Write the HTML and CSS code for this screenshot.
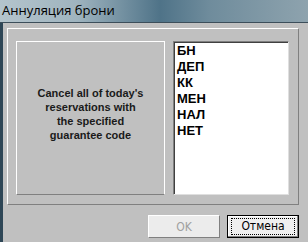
FILE: index.html
```html
<!DOCTYPE html>
<html lang="ru">
<head>
    <meta charset="UTF-8">
    <title>Аннуляция брони</title>
    <link rel="stylesheet" href="styles.css">
</head>
<body>
    <div class="titlebar">Аннуляция брони</div>
    <div class="window">
        <div class="panel">
            <div class="info">
                <p>Cancel all of today's<br>reservations with<br>the specified<br>guarantee code</p>
            </div>
            <ul class="codes">
                <li>БН</li>
                <li>ДЕП</li>
                <li>КК</li>
                <li>МЕН</li>
                <li>НАЛ</li>
                <li>НЕТ</li>
            </ul>
        </div>
        <div class="buttons">
            <button class="btn" disabled>OK</button>
            <button class="btn default"><span>Отмена</span></button>
        </div>
    </div>
</body>
</html>
```

FILE: styles.css
```css
/* dialog */
* {
    box-sizing: border-box;
}

body {
    margin: 0;
    width: 308px;
    height: 242px;
    overflow: hidden;
    background: #c0c0c0;
    font-family: "Liberation Sans", Arial, sans-serif;
}

.titlebar {
    height: 23px;
    line-height: 21px;
    padding-left: 2px;
    font-family: "Open Sans", "DejaVu Sans", sans-serif;
    font-size: 13px;
    color: #000;
    background: linear-gradient(90deg, #b4c4cc 0%, #9fb4bf 25%, #4f7388 52%, #6f8c9c 68%, #8ea3ae 100%);
    border-bottom: 1px solid #3c4e5a;
}

.window {
    height: 219px;
    border-left: 3px solid #2e4656;
    display: flex;
    flex-direction: column;
    padding: 5px 9px 0 4px;
}

.panel {
    height: 177px;
    border: 1px solid;
    border-color: #fff #808080 #808080 #fff;
    display: flex;
    gap: 8px;
    padding: 12px 9px 9px 8px;
}

.info {
    width: 149px;
    border: 1px solid;
    border-color: #fff #fff #808080 #fff;
    display: flex;
    align-items: center;
    justify-content: center;
    padding-bottom: 8px;
}

.info p {
    margin: 0;
    text-align: center;
    font-size: 11px;
    font-weight: bold;
    line-height: 14px;
    color: #1a1a1a;
}

.codes {
    flex: 1;
    margin: 0;
    list-style: none;
    background: #fff;
    border: 1px solid;
    border-color: #808080 #dfdfdf #dfdfdf #808080;
    box-shadow: inset 1px 1px 0 #404040;
    padding: 1px 3px;
}

.codes li {
    font-size: 13px;
    font-weight: bold;
    line-height: 16px;
    color: #000;
}

.buttons {
    display: flex;
    justify-content: flex-end;
    gap: 7px;
    margin-top: 10px;
}

.btn {
    width: 72px;
    height: 23px;
    padding: 0;
    background: #efefef;
    border: 1px solid;
    border-color: #fff #808080 #808080 #fff;
    font-family: "DejaVu Sans Condensed", "DejaVu Sans", sans-serif;
    font-size: 12px;
    color: #000;
}

.btn:disabled {
    color: #a0a0a0;
    background: #ececec;
}

.btn.default {
    border: 1px solid #000;
    box-shadow: inset -1px -1px 0 #808080, inset 1px 1px 0 #fff;
}

.btn.default span {
    display: block;
    margin: 2px 3px;
    height: 17px;
    line-height: 15px;
    border: 1px dotted #000;
}
```
